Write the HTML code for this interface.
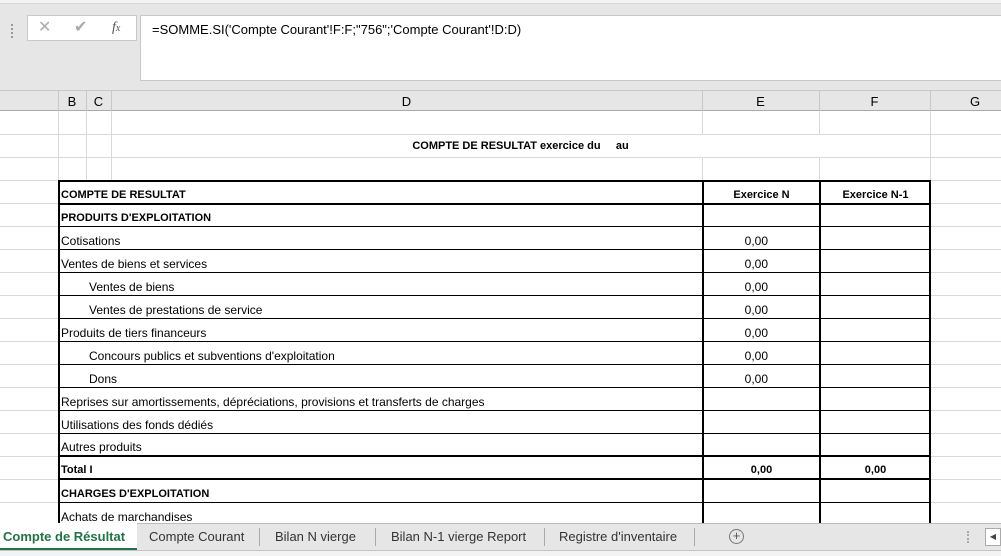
<!DOCTYPE html>
<html><head><meta charset="utf-8"><style>
*{margin:0;padding:0;box-sizing:border-box}
body{width:1001px;height:556px;overflow:hidden;background:#fff;font-family:"Liberation Sans",sans-serif;font-size:12px;color:#000;position:relative}
.a{position:absolute}
.t{position:absolute;white-space:nowrap;font-size:12px;line-height:23px}
.b{font-weight:bold}
</style></head><body>
<div class="a" style="left:0;top:0;width:1001px;height:111px;background:#e6e6e6"></div>
<div class="a" style="left:0;top:0;width:1001px;height:4px;background:#f3f3f3;border-bottom:1px solid #d6d6d6"></div>
<div class="a" style="left:11px;top:24px;width:3px;height:14px;border-left:2px dotted #999"></div>
<div class="a" style="left:27px;top:15px;width:110px;height:26px;background:#fff;border:1px solid #c8c8c8"></div>
<div class="t" style="left:38px;top:16px;color:#aaa;font-size:16px">✕</div>
<div class="t" style="left:74px;top:16px;color:#aaa;font-size:16px">✔</div>
<div class="t" style="left:112px;top:16px;color:#555;font-family:'Liberation Serif',serif;font-style:italic;font-size:14px">f<span style="font-size:10px">x</span></div>
<div class="a" style="left:140px;top:15px;width:861px;height:66px;background:#fff;border:1px solid #c8c8c8;border-right:none"></div>
<div class="t" style="left:152px;top:18px;font-size:13px">=SOMME.SI('Compte Courant'!F:F;"756";'Compte Courant'!D:D)</div>
<div class="a" style="left:0;top:90px;width:1001px;height:1px;background:#c8c8c8"></div>
<div class="a" style="left:0;top:110px;width:1001px;height:1px;background:#aaa"></div>
<div class="a" style="left:58px;top:91px;width:1px;height:20px;background:#c8c8c8"></div>
<div class="a" style="left:86px;top:91px;width:1px;height:20px;background:#c8c8c8"></div>
<div class="a" style="left:111px;top:91px;width:1px;height:20px;background:#c8c8c8"></div>
<div class="a" style="left:702px;top:91px;width:1px;height:20px;background:#c8c8c8"></div>
<div class="a" style="left:819px;top:91px;width:1px;height:20px;background:#c8c8c8"></div>
<div class="a" style="left:930px;top:91px;width:1px;height:20px;background:#c8c8c8"></div>
<div class="t" style="left:58px;width:28px;top:91px;text-align:center;font-size:13px;line-height:22px">B</div>
<div class="t" style="left:86px;width:25px;top:91px;text-align:center;font-size:13px;line-height:22px">C</div>
<div class="t" style="left:111px;width:591px;top:91px;text-align:center;font-size:13px;line-height:22px">D</div>
<div class="t" style="left:702px;width:117px;top:91px;text-align:center;font-size:13px;line-height:22px">E</div>
<div class="t" style="left:819px;width:111px;top:91px;text-align:center;font-size:13px;line-height:22px">F</div>
<div class="t" style="left:930px;width:90px;top:91px;text-align:center;font-size:13px;line-height:22px">G</div>
<svg class="a" style="left:0;top:111px" width="1001" height="412">
<g stroke="#d9d9d9" stroke-width="1">
<line x1="0" y1="23.5" x2="1001" y2="23.5"/><line x1="0" y1="46.5" x2="1001" y2="46.5"/>
<line x1="0" y1="69.5" x2="1001" y2="69.5"/>
<line x1="58.5" y1="0" x2="58.5" y2="69"/><line x1="86.5" y1="0" x2="86.5" y2="69"/>
<line x1="111.5" y1="0" x2="111.5" y2="69"/><line x1="702.5" y1="0" x2="702.5" y2="23"/><line x1="702.5" y1="46" x2="702.5" y2="69"/>
<line x1="819.5" y1="0" x2="819.5" y2="23"/><line x1="819.5" y1="46" x2="819.5" y2="69"/>
<line x1="930.5" y1="0" x2="930.5" y2="412"/>
<line x1="0" y1="92.5" x2="58" y2="92.5"/><line x1="930" y1="92.5" x2="1001" y2="92.5"/>
<line x1="0" y1="115.5" x2="58" y2="115.5"/><line x1="930" y1="115.5" x2="1001" y2="115.5"/>
<line x1="0" y1="138.5" x2="58" y2="138.5"/><line x1="930" y1="138.5" x2="1001" y2="138.5"/>
<line x1="0" y1="161.5" x2="58" y2="161.5"/><line x1="930" y1="161.5" x2="1001" y2="161.5"/>
<line x1="0" y1="184.5" x2="58" y2="184.5"/><line x1="930" y1="184.5" x2="1001" y2="184.5"/>
<line x1="0" y1="207.5" x2="58" y2="207.5"/><line x1="930" y1="207.5" x2="1001" y2="207.5"/>
<line x1="0" y1="230.5" x2="58" y2="230.5"/><line x1="930" y1="230.5" x2="1001" y2="230.5"/>
<line x1="0" y1="253.5" x2="58" y2="253.5"/><line x1="930" y1="253.5" x2="1001" y2="253.5"/>
<line x1="0" y1="276.5" x2="58" y2="276.5"/><line x1="930" y1="276.5" x2="1001" y2="276.5"/>
<line x1="0" y1="299.5" x2="58" y2="299.5"/><line x1="930" y1="299.5" x2="1001" y2="299.5"/>
<line x1="0" y1="322.5" x2="58" y2="322.5"/><line x1="930" y1="322.5" x2="1001" y2="322.5"/>
<line x1="0" y1="345.5" x2="58" y2="345.5"/><line x1="930" y1="345.5" x2="1001" y2="345.5"/>
<line x1="0" y1="368.5" x2="58" y2="368.5"/><line x1="930" y1="368.5" x2="1001" y2="368.5"/>
<line x1="0" y1="391.5" x2="58" y2="391.5"/><line x1="930" y1="391.5" x2="1001" y2="391.5"/>
</g>
<g stroke="#000">
<line x1="58" y1="70" x2="931" y2="70" stroke-width="2"/>
<line x1="58" y1="93" x2="931" y2="93" stroke-width="2"/>
<line x1="58" y1="115.5" x2="931" y2="115.5"/><line x1="58" y1="138.5" x2="931" y2="138.5"/>
<line x1="58" y1="161.5" x2="931" y2="161.5"/><line x1="58" y1="184.5" x2="931" y2="184.5"/>
<line x1="58" y1="207.5" x2="931" y2="207.5"/><line x1="58" y1="230.5" x2="931" y2="230.5"/>
<line x1="58" y1="253.5" x2="931" y2="253.5"/><line x1="58" y1="276.5" x2="931" y2="276.5"/>
<line x1="58" y1="299.5" x2="931" y2="299.5"/><line x1="58" y1="322.5" x2="931" y2="322.5"/>
<line x1="58" y1="345" x2="931" y2="345" stroke-width="2"/><line x1="58" y1="368" x2="931" y2="368" stroke-width="2"/>
<line x1="58" y1="391.5" x2="931" y2="391.5"/>
<line x1="59" y1="69" x2="59" y2="412" stroke-width="2"/>
<line x1="703" y1="69" x2="703" y2="412" stroke-width="2"/>
<line x1="820" y1="69" x2="820" y2="412" stroke-width="2"/>
<line x1="930" y1="69" x2="930" y2="412" stroke-width="2"/>
</g>
</svg>
<div class="t b" style="left:111px;width:819px;top:135px;text-align:center;font-size:11px">COMPTE DE RESULTAT exercice du &nbsp; &nbsp; au</div>
<div class="t b" style="left:61px;top:184px;font-size:11px">COMPTE DE RESULTAT</div>
<div class="t b" style="left:703px;width:117px;text-align:center;top:184px;font-size:11px">Exercice N</div>
<div class="t b" style="left:820px;width:111px;text-align:center;top:184px;font-size:11px">Exercice N-1</div>
<div class="t b" style="left:61px;top:207px;font-size:11px">PRODUITS D'EXPLOITATION</div>
<div class="t" style="left:61px;top:230px">Cotisations</div>
<div class="t" style="left:61px;top:253px">Ventes de biens et services</div>
<div class="t" style="left:89px;top:276px">Ventes de biens</div>
<div class="t" style="left:89px;top:299px">Ventes de prestations de service</div>
<div class="t" style="left:61px;top:322px">Produits de tiers financeurs</div>
<div class="t" style="left:89px;top:345px">Concours publics et subventions d'exploitation</div>
<div class="t" style="left:89px;top:368px">Dons</div>
<div class="t" style="left:61px;top:391px">Reprises sur amortissements, dépréciations, provisions et transferts de charges</div>
<div class="t" style="left:61px;top:414px">Utilisations des fonds dédiés</div>
<div class="t" style="left:61px;top:436px">Autres produits</div>
<div class="t b" style="left:61px;top:459px;font-size:11px">Total I</div>
<div class="t b" style="left:703px;width:117px;text-align:center;top:459px;font-size:11px">0,00</div>
<div class="t b" style="left:820px;width:111px;text-align:center;top:459px;font-size:11px">0,00</div>
<div class="t b" style="left:61px;top:483px;font-size:11px">CHARGES D'EXPLOITATION</div>
<div class="t" style="left:61px;top:506px">Achats de marchandises</div>
<div class="t" style="left:720px;width:48px;text-align:right;top:230px">0,00</div>
<div class="t" style="left:720px;width:48px;text-align:right;top:253px">0,00</div>
<div class="t" style="left:720px;width:48px;text-align:right;top:276px">0,00</div>
<div class="t" style="left:720px;width:48px;text-align:right;top:299px">0,00</div>
<div class="t" style="left:720px;width:48px;text-align:right;top:322px">0,00</div>
<div class="t" style="left:720px;width:48px;text-align:right;top:345px">0,00</div>
<div class="t" style="left:720px;width:48px;text-align:right;top:368px">0,00</div>
<div class="a" style="left:0;top:523px;width:1001px;height:28px;background:#e6e6e6;border-top:1px solid #bcbcbc;border-bottom:1px solid #c4c4c4"></div>
<div class="a" style="left:0;top:551px;width:1001px;height:5px;background:#f3f3f3"></div>
<div class="a" style="left:0;top:523px;width:137px;height:27px;background:#fff;border-bottom:2px solid #217346"></div>
<div class="t b" style="left:3px;top:525px;color:#217346;font-size:13px">Compte de Résultat</div>
<div class="t" style="left:149px;top:525px;font-size:13px;color:#333">Compte Courant</div>
<div class="a" style="left:259px;top:528px;width:1px;height:18px;background:#aaa"></div>
<div class="t" style="left:275px;top:525px;font-size:13px;color:#333">Bilan N vierge</div>
<div class="a" style="left:375px;top:528px;width:1px;height:18px;background:#aaa"></div>
<div class="t" style="left:391px;top:525px;font-size:13px;color:#333">Bilan N-1 vierge Report</div>
<div class="a" style="left:544px;top:528px;width:1px;height:18px;background:#aaa"></div>
<div class="t" style="left:559px;top:525px;font-size:13px;color:#333">Registre d'inventaire</div>
<div class="a" style="left:694px;top:528px;width:1px;height:18px;background:#aaa"></div>
<div class="a" style="left:729px;top:529px;width:15px;height:15px;border:1px solid #777;border-radius:50%;text-align:center;line-height:12px;font-size:13px;color:#555">+</div>
<div class="a" style="left:967px;top:531px;width:2px;height:12px;border-left:2px dotted #aaa"></div>
<div class="a" style="left:985px;top:528px;width:16px;height:18px;background:#fff;border:1px solid #aaa;font-size:8px;line-height:16px;text-align:center;color:#444">◀</div>
</body></html>
